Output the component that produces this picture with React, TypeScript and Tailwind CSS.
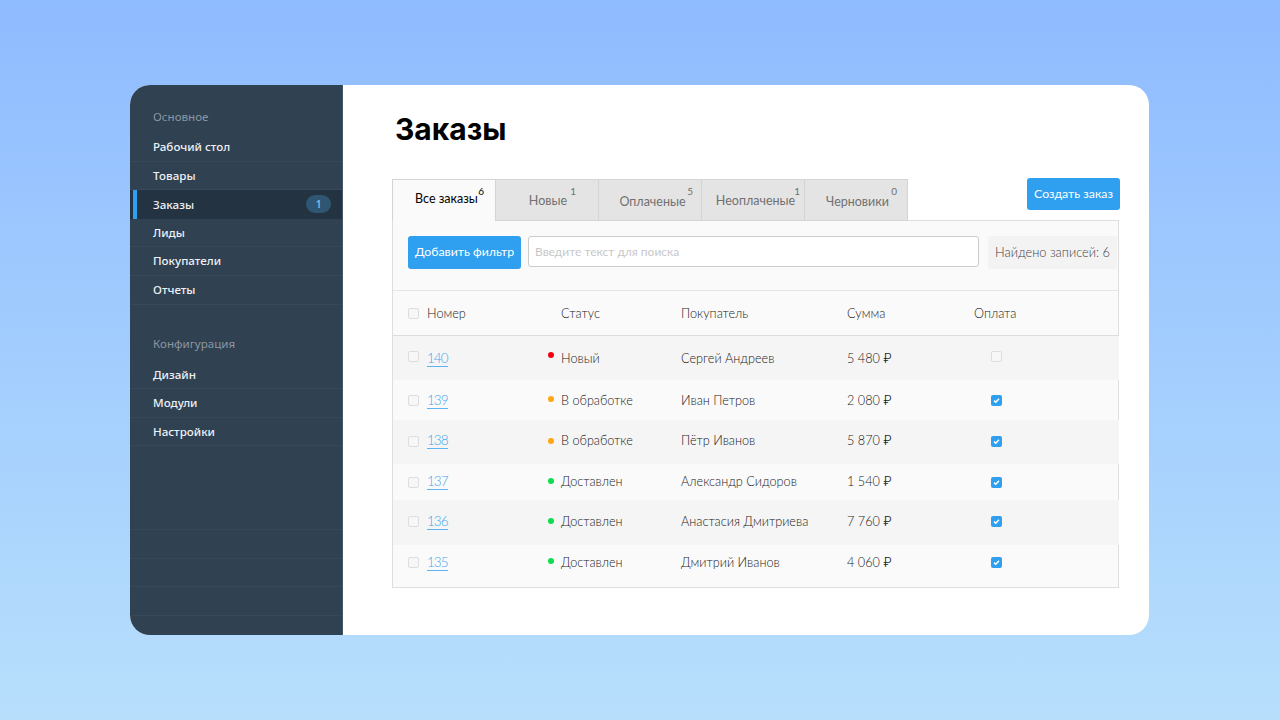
import React from "react";

function Check({ on = false, cls = "" }: { on?: boolean; cls?: string }) {
  if (on) {
    return (
      <span className={"flex h-[11px] w-[11px] items-center justify-center rounded-[2px] bg-[#2f9ff0] " + cls}>
        <svg viewBox="0 0 11 11" className="h-[11px] w-[11px]" fill="none" stroke="#ffffff" strokeWidth="1.5">
          <path d="M3 5.6 L4.8 7.3 L8 3.8" />
        </svg>
      </span>
    );
  }
  return <span className={"block h-[11px] w-[11px] rounded-[2px] border border-[#dddddd] bg-[#f7f7f7] " + cls} />;
}

function NavItem({ label, active = false, badge }: { label?: string; active?: boolean; badge?: string }) {
  return (
    <div
      className={
        "relative flex h-[28.6px] items-center justify-between pl-[23px] pr-[11px] " +
        (active ? "bg-[#233342]" : "border-b border-[#364859]")
      }
    >
      {active && <span className="absolute left-[3px] top-0 h-full w-[4px] bg-[#2f9ff0]" />}
      <span className="text-[11.6px] font-medium text-[#eef1f4]">{label}</span>
      {badge && (
        <span className="flex h-[18px] w-[25px] items-center justify-center rounded-full bg-[#2f5673] text-[10px] font-semibold text-[#7fbfe8]">
          {badge}
        </span>
      )}
    </div>
  );
}

const tabs = [
  { t: "Все заказы", n: "6", active: true, cls: "w-[104px] pb-[2px] pl-[5px] text-black", sup: "right-[11px] text-black" },
  { t: "Новые", n: "1", active: false, cls: "w-[103px] pt-[2px] pl-[2px] text-[#707070]", sup: "right-[22px] text-[#707070]" },
  { t: "Оплаченые", n: "5", active: false, cls: "w-[103px] pt-[5px] pl-[5px] text-[#707070]", sup: "right-[8px] text-[#707070]" },
  { t: "Неоплаченые", n: "1", active: false, cls: "w-[103px] pt-[2px] pl-[5px] text-[#707070]", sup: "right-[4px] text-[#707070]" },
  { t: "Черновики", n: "0", active: false, cls: "w-[103px] pt-[5px] pl-[3px] text-[#707070]", sup: "right-[10px] text-[#707070]" },
];

const rows = [
  { id: "140", dot: "bg-[#f5000f]", dotCls: "-mt-[7px]", box: "-mt-[5px]", st: "Новый", who: "Сергей Андреев", sum: "5 480 ₽", paid: false, cls: "h-[44px] bg-[#f5f5f5] -mr-px pt-[1px]" },
  { id: "139", dot: "bg-[#ffa516]", dotCls: "-mt-[3px]", box: "-mt-[1px]", st: "В обработке", who: "Иван Петров", sum: "2 080 ₽", paid: true, cls: "h-[40px] bg-[#fafafa] pt-[2px]" },
  { id: "138", dot: "bg-[#ffa516]", dotCls: "mt-[1px]", box: "mt-[2px]", st: "В обработке", who: "Пётр Иванов", sum: "5 870 ₽", paid: true, cls: "h-[44px] bg-[#f5f5f5] -mr-px pb-[3px]" },
  { id: "137", dot: "bg-[#10dc50]", dotCls: "-mt-[2px]", box: "", st: "Доставлен", who: "Александр Сидоров", sum: "1 540 ₽", paid: true, cls: "h-[36px] bg-[#fafafa]" },
  { id: "136", dot: "bg-[#10dc50]", dotCls: "", box: "", st: "Доставлен", who: "Анастасия Дмитриева", sum: "7 760 ₽", paid: true, cls: "h-[45px] bg-[#f5f5f5] -mr-px pb-[2px]" },
  { id: "135", dot: "bg-[#10dc50]", dotCls: "-mt-[2px]", box: "", st: "Доставлен", who: "Дмитрий Иванов", sum: "4 060 ₽", paid: true, cls: "h-[42px] bg-[#fafafa] pb-[7px]" },
];

const grid = "grid grid-cols-[140px_133px_166px_127px_1fr] items-center pl-[15px]";

export default function App() {
  return (
    <div className="flex h-[720px] w-[1280px] items-start overflow-hidden bg-gradient-to-b from-[#8fbbff] to-[#b7dffc] pl-[130px] pt-[85px]">
      <div className="flex h-[550px] w-[1019px] overflow-hidden rounded-[20px] bg-white">
        <aside className="flex w-[213px] shrink-0 flex-col border-r border-[#44586a] bg-[#304152] pt-[20px] font-['Noto_Sans',sans-serif]">
          <div className="mb-[4px] flex h-[24px] items-center pl-[23px] text-[11.6px] text-[#8a96a1]">Основное</div>
          <NavItem label="Рабочий стол" />
          <NavItem label="Товары" />
          <NavItem label="Заказы" active badge="1" />
          <NavItem label="Лиды" />
          <NavItem label="Покупатели" />
          <NavItem label="Отчеты" />
          <div className="mb-[5px] mt-[27px] flex h-[24px] items-center pl-[23px] text-[11.6px] text-[#8a96a1]">Конфигурация</div>
          <NavItem label="Дизайн" />
          <NavItem label="Модули" />
          <NavItem label="Настройки" />
          <div className="mb-[19px] mt-auto">
            <NavItem />
            <NavItem />
            <NavItem />
            <NavItem />
          </div>
        </aside>

        <main className="flex-1 pl-[49px] pr-[29px] font-['Lato','Inter',sans-serif] font-light text-[#1a1a1a]">
          <h1 className="ml-[3px] flex h-[93px] items-center pb-[4px] font-['Inter',sans-serif] text-[30px] font-bold text-black">Заказы</h1>
          <div className="flex items-start justify-between">
            <div className="mt-[1px] flex h-[42px]">
              {tabs.map((t) => (
                <div
                  key={t.t}
                  className={
                    "relative z-10 flex h-[42px] items-center justify-center border-t border-r border-[#d4d4d4] text-[12.5px] font-normal " +
                    (t.active ? "border-l bg-[#fafafa] " : "border-b bg-[#e4e4e4] ") +
                    t.cls
                  }
                >
                  {t.t}
                  <span className={"absolute top-[4px] text-[10px] " + t.sup}>{t.n}</span>
                </div>
              ))}
            </div>
            <button className="h-[32px] w-[93px] rounded-[3px] bg-[#2f9ff0] text-[12.3px] font-normal text-white">Создать заказ</button>
          </div>
          <div className="mr-[1px] -mt-px border border-[#dedede] bg-[#fafafa]">
            <div className="flex h-[70px] items-start border-b border-[#e6e6e6] pl-[15px] pt-[15px]">
              <button className="h-[33px] w-[113px] rounded-[3px] bg-[#2f9ff0] text-[12.3px] font-normal text-white">Добавить фильтр</button>
              <div className="ml-[7px] flex h-[31px] w-[451px] items-center rounded-[3px] border border-[#cccccc] bg-white pl-[6px] text-[12px] font-normal text-[#c8c8c8]">
                Введите текст для поиска
              </div>
              <div className="ml-[9px] flex h-[33px] w-[129px] items-center justify-center rounded-[3px] bg-[#f3f3f3] text-[12.8px] text-[#444444]">
                Найдено записей: 6
              </div>
            </div>
            <div className={grid + " h-[45px] border-b border-[#dddddd] pt-[2px] text-[12.7px]"}>
              <div className="flex items-center gap-[8px]">
                <Check />
                <span>Номер</span>
              </div>
              <span className="pl-[13px]">Статус</span>
              <span>Покупатель</span>
              <span>Сумма</span>
              <span>Оплата</span>
            </div>
            {rows.map((r) => (
              <div key={r.id} className={grid + " text-[12.7px] " + r.cls}>
                <div className="flex items-center gap-[8px]">
                  <Check cls={r.box} />
                  <span className="border-b border-[#5eb4f3] text-[13.5px] leading-[15px] tracking-[-1px] text-[#46a6ee]">{r.id}</span>
                </div>
                <div className="flex items-center">
                  <span className={"mr-[7px] h-[6px] w-[6px] rounded-full " + r.dot + " " + r.dotCls} />
                  <span>{r.st}</span>
                </div>
                <span>{r.who}</span>
                <span>{r.sum}</span>
                <div className="pl-[17px]">
                  <Check on={r.paid} cls={r.box} />
                </div>
              </div>
            ))}
          </div>
        </main>
      </div>
    </div>
  );
}
